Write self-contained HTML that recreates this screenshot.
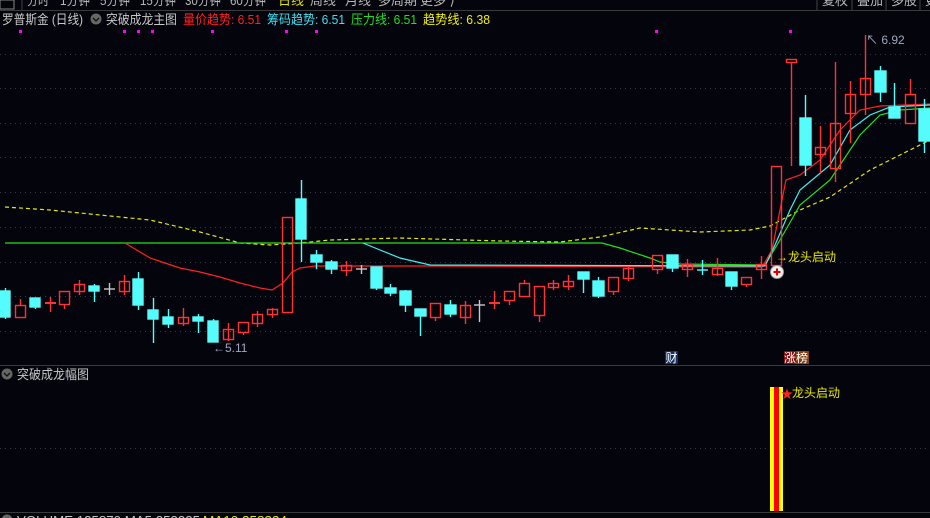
<!DOCTYPE html>
<html><head><meta charset="utf-8"><style>
html,body{margin:0;padding:0;background:#04040c;width:930px;height:518px;overflow:hidden}
svg{display:block}
text{font-family:"Liberation Sans","Noto Sans CJK SC",sans-serif}
</style></head><body>
<svg width="930" height="518" viewBox="0 0 930 518" xmlns="http://www.w3.org/2000/svg">
<rect width="930" height="518" fill="#04040c"/>
<!-- top toolbar -->
<g font-size="13" fill="#b8b8b8">
<text x="27" y="5" textLength="22" lengthAdjust="spacingAndGlyphs">分时</text><text x="60" y="5" textLength="30" lengthAdjust="spacingAndGlyphs">1分钟</text><text x="100" y="5" textLength="30" lengthAdjust="spacingAndGlyphs">5分钟</text><text x="140" y="5" textLength="36" lengthAdjust="spacingAndGlyphs">15分钟</text><text x="185" y="5" textLength="36" lengthAdjust="spacingAndGlyphs">30分钟</text><text x="230" y="5" textLength="36" lengthAdjust="spacingAndGlyphs">60分钟</text><text x="278" y="5" fill="#e0e000">日线</text><text x="310" y="5">周线</text><text x="345" y="5">月线</text><text x="378" y="5">多周期</text><text x="420" y="5">更多 ⟩</text>
<text x="822" y="5">复权</text><text x="857" y="5">叠加</text><text x="891" y="5">多股</text><text x="925" y="5">更</text>
</g>
<rect x="0" y="0" width="14" height="9" fill="none" stroke="#888" stroke-width="1"/>
<line x1="22" y1="0" x2="22" y2="10" stroke="#444"/>
<g stroke="#444"><line x1="817" y1="0" x2="817" y2="10"/><line x1="852" y1="0" x2="852" y2="10"/><line x1="886" y1="0" x2="886" y2="10"/><line x1="920" y1="0" x2="920" y2="10"/></g>
<line x1="0" y1="10.5" x2="930" y2="10.5" stroke="#3a3a3a"/>
<!-- header -->
<g font-size="13">
<text x="2" y="24" fill="#c8c8c8" textLength="81" lengthAdjust="spacingAndGlyphs">罗普斯金 (日线)</text>
<circle cx="96" cy="19" r="5.5" fill="#666"/><path d="M93 18l3 3 3-3" stroke="#111" fill="none" stroke-width="1.3"/>
<text x="106" y="24" fill="#c8c8c8" textLength="71" lengthAdjust="spacingAndGlyphs">突破成龙主图</text>
<text x="183" y="24" fill="#ff2020" textLength="78" lengthAdjust="spacingAndGlyphs">量价趋势: 6.51</text>
<text x="267" y="24" fill="#40e0f0" textLength="78" lengthAdjust="spacingAndGlyphs">筹码趋势: 6.51</text>
<text x="351" y="24" fill="#20e020" textLength="66" lengthAdjust="spacingAndGlyphs">压力线: 6.51</text>
<text x="423" y="24" fill="#f0f000" textLength="67" lengthAdjust="spacingAndGlyphs">趋势线: 6.38</text>
</g>
<g fill="#ff00ff"><rect x="19" y="30" width="3" height="3"/><rect x="123" y="30" width="3" height="3"/><rect x="137" y="30" width="3" height="3"/><rect x="151" y="30" width="3" height="3"/><rect x="211" y="30" width="3" height="3"/><rect x="285" y="30" width="3" height="3"/><rect x="315" y="30" width="3" height="3"/><rect x="655" y="30" width="3" height="3"/><rect x="789" y="30" width="3" height="3"/></g>
<!-- grid -->
<g stroke="#3a3a46" stroke-dasharray="1 4">
<line x1="0" y1="54.5" x2="930" y2="54.5"/><line x1="0" y1="88.5" x2="930" y2="88.5"/><line x1="0" y1="123.5" x2="930" y2="123.5"/><line x1="0" y1="157.5" x2="930" y2="157.5"/><line x1="0" y1="192.5" x2="930" y2="192.5"/><line x1="0" y1="227.5" x2="930" y2="227.5"/><line x1="0" y1="262.5" x2="930" y2="262.5"/><line x1="0" y1="296.5" x2="930" y2="296.5"/><line x1="0" y1="331.5" x2="930" y2="331.5"/><line x1="0" y1="448.5" x2="930" y2="448.5"/>
</g>
<line x1="0" y1="365.5" x2="930" y2="365.5" stroke="#3a3a3a"/>
<line x1="0" y1="512.5" x2="930" y2="512.5" stroke="#3a3a3a"/>
<!-- indicator lines -->
<polyline fill="none" stroke="#e8e800" stroke-width="1.2" stroke-dasharray="4 3" points="5,207 50,210 100,215 150,220 200,232 240,243 270,245 300,243 330,240 400,238 500,241 560,242 600,237 640,228 700,232 750,230 770,226 800,210 830,197 870,170 900,155 930,140"/>
<polyline fill="none" stroke="#20e020" stroke-width="1.2" points="5,243 602,243 620,248 650,258 660,262 680,264 765,265 780,240 800,205 830,180 860,135 880,115 900,110 930,108"/>
<polyline fill="none" stroke="#ff2020" stroke-width="1.2" points="125,243 150,258 165,263 180,268 200,272 220,277 240,283 260,288 272,290 283,283 292,272 300,268 315,266 430,266 762,267 772,250 786,180 800,175 820,160 840,130 860,110 880,106 930,104"/>
<polyline fill="none" stroke="#40f0f0" stroke-width="1.2" points="363,243 380,250 400,258 430,265 765,266 775,245 790,210 800,190 830,165 850,130 870,115 890,107 930,105"/>
<!-- candles -->
<g stroke-width="1.4">
<g stroke="#54fcfc" fill="#54fcfc">
<line x1="5.5" y1="288" x2="5.5" y2="319"/><rect x="0" y="291" width="10" height="26"/>
<line x1="35.5" y1="298" x2="35.5" y2="309"/><rect x="30" y="298" width="10" height="9"/>
<line x1="94.5" y1="284" x2="94.5" y2="302"/><rect x="89" y="286" width="10" height="5"/>
<line x1="138.5" y1="272" x2="138.5" y2="310"/><rect x="133" y="279" width="10" height="26"/>
<line x1="153.5" y1="298" x2="153.5" y2="343"/><rect x="148" y="310" width="10" height="9"/>
<line x1="168.5" y1="309" x2="168.5" y2="328"/><rect x="163" y="317" width="10" height="7"/>
<line x1="198.5" y1="314" x2="198.5" y2="333"/><rect x="193" y="317" width="10" height="4"/>
<line x1="213.5" y1="319" x2="213.5" y2="342"/><rect x="208" y="321" width="10" height="21"/>
<line x1="301.5" y1="180" x2="301.5" y2="262"/><rect x="296" y="199" width="10" height="40"/>
<line x1="316.5" y1="250" x2="316.5" y2="269"/><rect x="311" y="255" width="11" height="7"/>
<line x1="331.5" y1="260" x2="331.5" y2="274"/><rect x="326" y="262" width="11" height="7"/>
<line x1="376.5" y1="267" x2="376.5" y2="290"/><rect x="371" y="267" width="11" height="21"/>
<line x1="390.5" y1="284" x2="390.5" y2="296"/><rect x="385" y="288" width="11" height="5"/>
<line x1="405.5" y1="290" x2="405.5" y2="312"/><rect x="400" y="291" width="11" height="14"/>
<line x1="420.5" y1="309" x2="420.5" y2="336"/><rect x="415" y="309" width="11" height="7"/>
<line x1="450.5" y1="300" x2="450.5" y2="317"/><rect x="445" y="305" width="11" height="9"/>
<line x1="583.5" y1="272" x2="583.5" y2="293"/><rect x="578" y="272" width="11" height="7"/>
<line x1="598.5" y1="277" x2="598.5" y2="298"/><rect x="593" y="281" width="11" height="15"/>
<line x1="672.5" y1="255" x2="672.5" y2="272"/><rect x="667" y="255" width="11" height="13"/>
<line x1="702.5" y1="260" x2="702.5" y2="275"/><line x1="697" y1="270" x2="708" y2="270"/>
<line x1="731.5" y1="272" x2="731.5" y2="290"/><rect x="726" y="272" width="11" height="14"/>
<line x1="805.5" y1="95" x2="805.5" y2="176"/><rect x="800" y="118" width="11" height="47"/>
<line x1="880.5" y1="66" x2="880.5" y2="102"/><rect x="875" y="71" width="11" height="21"/>
<line x1="894.5" y1="83" x2="894.5" y2="118"/><rect x="889" y="107" width="11" height="11"/>
<line x1="924.5" y1="99" x2="924.5" y2="153"/><rect x="919" y="109" width="11" height="32"/>
</g>
<g stroke="#ff3232" fill="none">
<line x1="20.5" y1="299" x2="20.5" y2="305"/><rect x="15.5" y="305.5" width="10" height="12"/>
<line x1="50.5" y1="297" x2="50.5" y2="312"/><line x1="45" y1="303" x2="56" y2="303" stroke-width="2"/>
<line x1="64.5" y1="304" x2="64.5" y2="309"/><rect x="59.5" y="291.5" width="10" height="13"/>
<line x1="79.5" y1="280" x2="79.5" y2="295"/><rect x="74.5" y="284.5" width="10" height="7"/>
<line x1="124.5" y1="275" x2="124.5" y2="295"/><rect x="119.5" y="281.5" width="10" height="10"/>
<line x1="183.5" y1="308" x2="183.5" y2="326"/><rect x="178.5" y="317.5" width="10" height="6"/>
<line x1="228.5" y1="323" x2="228.5" y2="341"/><rect x="223.5" y="329.5" width="10" height="10"/>
<line x1="243.5" y1="332" x2="243.5" y2="335"/><rect x="238.5" y="322.5" width="10" height="10"/>
<line x1="257.5" y1="311" x2="257.5" y2="327"/><rect x="252.5" y="314.5" width="10" height="9"/>
<line x1="272.5" y1="308" x2="272.5" y2="318"/><rect x="267.5" y="309.5" width="10" height="5"/>
<rect x="282.5" y="217.5" width="10" height="95"/>
<line x1="346.5" y1="261" x2="346.5" y2="276"/><rect x="341.5" y="265.5" width="10" height="5"/>
<line x1="435.5" y1="317" x2="435.5" y2="321"/><rect x="430.5" y="303.5" width="10" height="14"/>
<line x1="465.5" y1="301" x2="465.5" y2="324"/><rect x="460.5" y="305.5" width="10" height="12"/>
<line x1="494.5" y1="291" x2="494.5" y2="309"/><line x1="489" y1="303" x2="500" y2="303" stroke-width="2"/>
<line x1="509.5" y1="300" x2="509.5" y2="305"/><rect x="504.5" y="291.5" width="10" height="9"/>
<line x1="524.5" y1="280" x2="524.5" y2="283"/><rect x="519.5" y="283.5" width="10" height="13"/>
<line x1="539.5" y1="315" x2="539.5" y2="322"/><rect x="534.5" y="286.5" width="10" height="29"/>
<line x1="553.5" y1="280" x2="553.5" y2="290"/><rect x="548.5" y="283.5" width="10" height="4"/>
<line x1="568.5" y1="275" x2="568.5" y2="290"/><rect x="563.5" y="281.5" width="10" height="5"/>
<line x1="613.5" y1="291" x2="613.5" y2="295"/><rect x="608.5" y="277.5" width="10" height="14"/>
<line x1="628.5" y1="266" x2="628.5" y2="281"/><rect x="623.5" y="268.5" width="10" height="10"/>
<line x1="657.5" y1="269" x2="657.5" y2="274"/><rect x="652.5" y="255.5" width="10" height="14"/>
<line x1="687.5" y1="259" x2="687.5" y2="277"/><rect x="682.5" y="264.5" width="10" height="5"/>
<line x1="717.5" y1="258" x2="717.5" y2="276"/><rect x="712.5" y="268.5" width="10" height="6"/>
<line x1="746.5" y1="284" x2="746.5" y2="287"/><rect x="741.5" y="277.5" width="10" height="7"/>
<line x1="761.5" y1="256" x2="761.5" y2="279"/><rect x="756.5" y="264.5" width="10" height="5"/>
<rect x="771.5" y="166.5" width="10" height="99"/>
<line x1="791.5" y1="62" x2="791.5" y2="166"/><rect x="786.5" y="59.5" width="10" height="3"/>
<line x1="820.5" y1="126" x2="820.5" y2="173"/><rect x="815.5" y="147.5" width="10" height="7"/>
<line x1="835.5" y1="62" x2="835.5" y2="182"/><rect x="830.5" y="123.5" width="10" height="45"/>
<line x1="850.5" y1="81" x2="850.5" y2="143"/><rect x="845.5" y="94.5" width="10" height="19"/>
<line x1="865.5" y1="35" x2="865.5" y2="115"/><rect x="860.5" y="78.5" width="10" height="16"/>
<line x1="910.5" y1="79" x2="910.5" y2="94"/><rect x="905.5" y="94.5" width="10" height="29"/>
</g>
<g stroke="#c8c8c8"><line x1="109.5" y1="283" x2="109.5" y2="295"/><line x1="104" y1="289" x2="115" y2="289"/>
<line x1="361.5" y1="265" x2="361.5" y2="274"/><line x1="356" y1="269" x2="367" y2="269"/>
<line x1="479.5" y1="300" x2="479.5" y2="322"/><line x1="474" y1="305" x2="485" y2="305"/></g>
</g>
<!-- labels -->
<text x="213" y="352" font-size="12" fill="#a0a8c0">←5.11</text>
<text x="866" y="44" font-size="12" fill="#a0a8c0">↖ 6.92</text>
<text x="776" y="261" font-size="12" fill="#e8e800">→龙头启动</text>
<circle cx="777" cy="272" r="6.5" fill="#f0f0f0" stroke="#999"/>
<path d="M773.5 272h7M777 268.5v7" stroke="#e00000" stroke-width="2"/>
<rect x="665" y="351" width="13" height="13" fill="#103060"/>
<text x="665.5" y="362" font-size="12" fill="#fff">财</text>
<rect x="784" y="351" width="12" height="13" fill="#801010"/><rect x="796" y="351" width="13" height="13" fill="#804010"/>
<text x="784" y="362" font-size="12" fill="#fff">涨榜</text>
<!-- lower pane -->
<circle cx="7" cy="374" r="5.5" fill="#666"/><path d="M4 373l3 3 3-3" stroke="#111" fill="none" stroke-width="1.3"/>
<text x="17" y="379" font-size="13" fill="#c8c8c8" textLength="72" lengthAdjust="spacingAndGlyphs">突破成龙幅图</text>
<rect x="770" y="387" width="13" height="124" fill="#ffff00"/>
<rect x="774" y="387" width="5" height="124" fill="#ff0000"/>
<text x="781" y="398" font-size="12" fill="#ff2020">★</text>
<text x="792" y="397" font-size="12" fill="#e8e800">龙头启动</text>
<!-- bottom -->
<circle cx="7" cy="520" r="5.5" fill="#666"/>
<text x="17" y="525" font-size="13" fill="#c8c8c8" textLength="183" lengthAdjust="spacingAndGlyphs">VOLUME 125870 MA5 253325</text>
<text x="203" y="525" font-size="13" fill="#e8e800" textLength="84" lengthAdjust="spacingAndGlyphs">MA10 258334</text>
</svg>
</body></html>
